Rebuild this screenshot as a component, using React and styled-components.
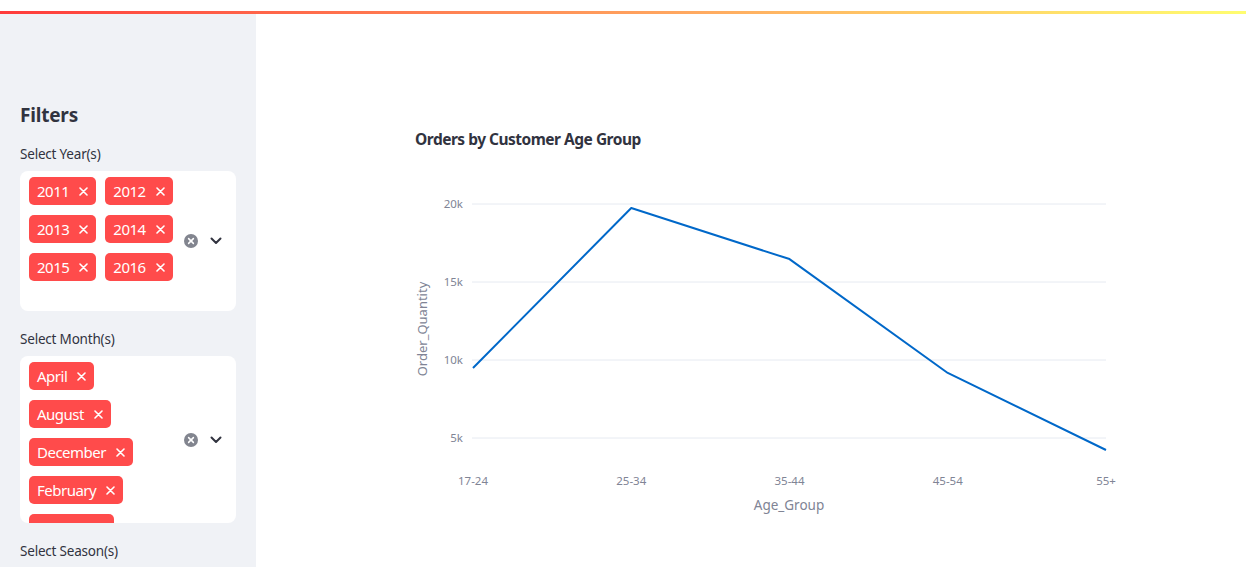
import styled, { createGlobalStyle } from "styled-components";

const GlobalStyle = createGlobalStyle`
  html, body {
    margin: 0;
    padding: 0;
    background: #ffffff;
    font-family: "Noto Sans", "Open Sans", sans-serif;
    color: #31333f;
  }
`;

const years = ["2011", "2012", "2013", "2014", "2015", "2016"];
const months = ["April", "August", "December", "February", "January"];

const ageData = [
  { group: "17-24", qty: 9490 },
  { group: "25-34", qty: 19740 },
  { group: "35-44", qty: 16470 },
  { group: "45-54", qty: 9170 },
  { group: "55+", qty: 4230 },
];

const CloseIcon = () => (
  <svg width="9" height="9" viewBox="0 0 9 9">
    <path d="M1 1 L8 8 M8 1 L1 8" stroke="#fff" strokeWidth="1.6" strokeLinecap="round" />
  </svg>
);

const ClearIcon = () => (
  <svg width="14" height="14" viewBox="0 0 14 14">
    <circle cx="7" cy="7" r="7" fill="#82858f" />
    <path d="M4.6 4.6 L9.4 9.4 M9.4 4.6 L4.6 9.4" stroke="#fff" strokeWidth="1.5" strokeLinecap="round" />
  </svg>
);

const Chevron = () => (
  <svg width="12" height="8" viewBox="0 0 12 8">
    <path d="M1.5 1.5 L6 6 L10.5 1.5" stroke="#31333f" strokeWidth="2" fill="none" strokeLinecap="round" strokeLinejoin="round" />
  </svg>
);

const MultiSelect = ({ items, height }) => (
  <SelectBox $height={height}>
    <TagArea>
      {items.map((it) => (
        <Tag key={it}>
          <span>{it}</span>
          <CloseIcon />
        </Tag>
      ))}
    </TagArea>
    <Controls>
      <ClearIcon />
      <Chevron />
    </Controls>
  </SelectBox>
);

const LineChart = () => {
  const x0 = 58;
  const step = 158.25;
  const yOf = (v) => 288 - ((v - 5000) / 5000) * 78;
  const ticks = [20000, 15000, 10000, 5000];
  const points = ageData.map((d, i) => `${x0 + i * step},${yOf(d.qty)}`).join(" ");

  return (
    <svg width="740" height="380" viewBox="0 0 740 380">
      {ticks.map((t) => (
        <g key={t}>
          <line x1="57" x2="691" y1={yOf(t)} y2={yOf(t)} stroke="#e6eaf1" strokeWidth="1" />
          <text x="48" y={yOf(t) + 4} textAnchor="end" fontSize="11.5" fill="#808495" fontFamily="Noto Sans, sans-serif">
            {t / 1000}k
          </text>
        </g>
      ))}
      <polyline points={points} fill="none" stroke="#0068c9" strokeWidth="2" strokeLinejoin="round" />
      {ageData.map((d, i) => (
        <text
          key={d.group}
          x={x0 + i * step}
          y="335"
          textAnchor="middle"
          fontSize="11.5"
          fill="#808495"
          fontFamily="Noto Sans, sans-serif"
        >
          {d.group}
        </text>
      ))}
      <text x="374" y="360" textAnchor="middle" fontSize="13.5" fill="#808495" fontFamily="Noto Sans, sans-serif">
        Age_Group
      </text>
      <text
        x="0"
        y="0"
        transform="translate(12 179) rotate(-90)"
        textAnchor="middle"
        fontSize="13"
        fill="#808495"
        fontFamily="Noto Sans, sans-serif"
      >
        Order_Quantity
      </text>
    </svg>
  );
};

export default function App() {
  return (
    <>
      <GlobalStyle />
      <Page>
        <TopSpace />
        <Decoration />
        <Body>
          <Sidebar>
            <Heading>Filters</Heading>
            <Label>Select Year(s)</Label>
            <MultiSelect items={years} height={140} />
            <Label $gap>Select Month(s)</Label>
            <MultiSelect items={months} height={167} />
            <Label $gap>Select Season(s)</Label>
          </Sidebar>
          <Main>
            <ChartTitle>Orders by Customer Age Group</ChartTitle>
            <LineChart />
          </Main>
        </Body>
      </Page>
    </>
  );
}

const Page = styled.div`
  width: 1246px;
  height: 567px;
  overflow: hidden;
  display: flex;
  flex-direction: column;
`;

const TopSpace = styled.div`
  height: 11px;
  background: #ffffff;
`;

const Decoration = styled.div`
  height: 3px;
  background: linear-gradient(90deg, #ff3b3b, #ffa860 55%, #fffd70);
`;

const Body = styled.div`
  flex: 1;
  display: flex;
  min-height: 0;
`;

const Sidebar = styled.aside`
  width: 256px;
  flex-shrink: 0;
  box-sizing: border-box;
  background: #f0f2f6;
  padding: 87px 20px 0 20px;
  display: flex;
  flex-direction: column;
  overflow: hidden;
`;

const Heading = styled.h2`
  margin: 0 0 15px 0;
  font-size: 19px;
  line-height: 28px;
  font-weight: 700;
  letter-spacing: -0.2px;
  color: #31333f;
`;

const Label = styled.div`
  font-size: 13.5px;
  line-height: 20px;
  letter-spacing: -0.2px;
  color: #31333f;
  margin-top: ${(p) => (p.$gap ? "18px" : "0")};
  margin-bottom: 7px;
`;

const SelectBox = styled.div`
  height: ${(p) => p.$height}px;
  flex-shrink: 0;
  box-sizing: border-box;
  background: #ffffff;
  border-radius: 8px;
  padding: 6px 14px 0 9px;
  display: flex;
  align-items: flex-start;
  overflow: hidden;
`;

const TagArea = styled.div`
  width: 148px;
  display: flex;
  flex-wrap: wrap;
  gap: 10px 9px;
`;

const Tag = styled.div`
  height: 28px;
  box-sizing: border-box;
  padding: 0 8px 0 8px;
  display: inline-flex;
  align-items: center;
  gap: 10px;
  background: #ff4b4b;
  border-radius: 5px;
  color: #ffffff;
  font-size: 15px;
  letter-spacing: -0.5px;
`;

const Controls = styled.div`
  margin-left: auto;
  align-self: center;
  display: flex;
  align-items: center;
  gap: 12px;
  margin-top: -6px;
`;

const Main = styled.main`
  flex: 1;
  box-sizing: border-box;
  padding: 114px 0 0 159px;
  display: flex;
  flex-direction: column;
`;

const ChartTitle = styled.h3`
  margin: 0;
  font-size: 15.5px;
  line-height: 22px;
  font-weight: 700;
  letter-spacing: -0.5px;
  color: #31333f;
`;
